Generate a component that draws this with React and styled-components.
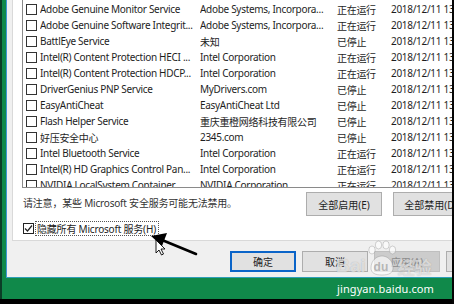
import styled, { createGlobalStyle } from 'styled-components';

const GlobalStyle = createGlobalStyle`
  html, body {
    margin: 0;
    padding: 0;
    background: #000;
  }
  * {
    box-sizing: border-box;
  }
`;

const services = [
  { name: 'Adobe Genuine Monitor Service', maker: 'Adobe Systems, Incorpora...', status: '正在运行' },
  { name: 'Adobe Genuine Software Integrit...', maker: 'Adobe Systems, Incorpora...', status: '正在运行' },
  { name: 'BattlEye Service', maker: '未知', status: '已停止' },
  { name: 'Intel(R) Content Protection HECI ...', maker: 'Intel Corporation', status: '正在运行' },
  { name: 'Intel(R) Content Protection HDCP...', maker: 'Intel Corporation', status: '正在运行' },
  { name: 'DriverGenius PNP Service', maker: 'MyDrivers.com', status: '已停止' },
  { name: 'EasyAntiCheat', maker: 'EasyAntiCheat Ltd', status: '已停止' },
  { name: 'Flash Helper Service', maker: '重庆重橙网络科技有限公司', status: '已停止' },
  { name: '好压安全中心', maker: '2345.com', status: '已停止' },
  { name: 'Intel Bluetooth Service', maker: 'Intel Corporation', status: '正在运行' },
  { name: 'Intel(R) HD Graphics Control Pan...', maker: 'Intel Corporation', status: '正在运行' },
  { name: 'NVIDIA LocalSystem Container', maker: 'NVIDIA Corporation', status: '正在运行' },
];

const App = () => {
  return (
    <>
      <GlobalStyle />
      <SScreen>
        <SDesktop>
          <SWindow>
            <SPanel>
              <SList>
                {services.map((s) => (
                  <SRow key={s.name}>
                    <SBox />
                    <SName>{s.name}</SName>
                    <SMaker>{s.maker}</SMaker>
                    <SStatus>{s.status}</SStatus>
                    <SDate>2018/12/11 13:42</SDate>
                  </SRow>
                ))}
              </SList>
              <SActionRow>
                <SNote>请注意，某些 Microsoft 安全服务可能无法禁用。</SNote>
                <SButtonGroup>
                  <SButton $wide>全部启用(E)</SButton>
                  <SButton $wide>全部禁用(D)</SButton>
                </SButtonGroup>
              </SActionRow>
              <SCheckRow>
                <SBox $checked>
                  <svg width="9" height="9" viewBox="0 0 9 9">
                    <path d="M1 4.5 L3.5 7 L8 1.5" fill="none" stroke="#222" strokeWidth="1.2" />
                  </svg>
                </SBox>
                <SFocusLabel>隐藏所有 Microsoft 服务(H)</SFocusLabel>
              </SCheckRow>
            </SPanel>
            <SDialogButtons>
              <SButton $default>确定</SButton>
              <SButton>取消</SButton>
              <SButton disabled>应用(A)</SButton>
              <SButton>帮助</SButton>
            </SDialogButtons>
          </SWindow>
          <SFooter>jingyan.baidu.com</SFooter>
        </SDesktop>
        <SRightEdge />

        <SWatermark>
          <SMarkText>Bai</SMarkText>
          <SPaw>
            <svg width="30" height="36" viewBox="0 0 30 36">
              <g fill="rgba(255,255,255,0.62)" stroke="rgba(120,120,120,0.4)" strokeWidth="0.8">
                <ellipse cx="5" cy="10" rx="3.2" ry="4" />
                <ellipse cx="11.5" cy="5" rx="3.2" ry="4" />
                <ellipse cx="19" cy="5" rx="3.2" ry="4" />
                <ellipse cx="25.5" cy="10" rx="3.2" ry="4" />
                <path d="M4 28 C4 20 10 16 15 16 C20 16 26 20 26 28 C26 33 22 35 15 35 C8 35 4 33 4 28 Z" />
              </g>
            </svg>
            <SPawText>du</SPawText>
          </SPaw>
          <SMarkText $cjk>经验</SMarkText>
        </SWatermark>

        <SPointer width="454" height="304" viewBox="0 0 454 304">
          <line x1="196" y1="254" x2="162" y2="240" stroke="#000" strokeWidth="2.6" strokeLinecap="round" />
          <polygon points="151,236 167,233 162,246" fill="#000" />
          <path
            d="M156 240 L156 253 L159 250 L161.5 255 L163.5 254 L161 249 L165 249 Z"
            fill="#fff"
            stroke="#000"
            strokeWidth="0.9"
            strokeLinejoin="round"
          />
        </SPointer>
      </SScreen>
    </>
  );
};

const SScreen = styled.div`
  position: relative;
  width: 454px;
  height: 304px;
  display: flex;
  background: #000;
  overflow: hidden;
  font-family: "Noto Sans", "Noto Sans CJK SC", sans-serif;
  font-size: 10px;
  color: #1e1e1e;
`;

const SDesktop = styled.div`
  width: 452px;
  height: 299px;
  flex-shrink: 0;
  display: flex;
  flex-direction: column;
  background: #10894a;
  border-left: 2px solid #0b3d27;
  padding-left: 4px;
  overflow: hidden;
`;

const SRightEdge = styled.div`
  flex: 1;
  background: #050505;
`;

const SWindow = styled.div`
  width: 540px;
  height: 278px;
  flex-shrink: 0;
  display: flex;
  flex-direction: column;
  padding-left: 5px;
  background: #f0f0f0;
  border-left: 1px solid #3d97d3;
  border-bottom: 1px solid #2f9fb8;
`;

const SPanel = styled.div`
  height: 241px;
  flex-shrink: 0;
  display: flex;
  flex-direction: column;
  padding: 0 0 4px 9px;
  background: #fff;
  border-left: 1px solid #d9d9d9;
  border-bottom: 1px solid #d9d9d9;
`;

const SList = styled.div`
  height: 188px;
  flex-shrink: 0;
  padding-top: 1px;
  overflow: hidden;
  background: #fff;
  border-left: 1px solid #8a8a8a;
  border-bottom: 1px solid #8a8a8a;
`;

const SRow = styled.div`
  height: 16px;
  display: flex;
  align-items: center;
  padding-left: 3px;
  white-space: nowrap;
  letter-spacing: -0.3px;
`;

const SBox = styled.span`
  width: 11px;
  height: 11px;
  flex-shrink: 0;
  display: flex;
  align-items: center;
  justify-content: center;
  margin-right: 3px;
  background: #fff;
  border: 1px solid ${(p) => (p.$checked ? '#222' : '#333')};
`;

const SName = styled.span`
  width: 160px;
  flex-shrink: 0;
  overflow: hidden;
`;

const SMaker = styled.span`
  width: 137px;
  flex-shrink: 0;
  overflow: hidden;
`;

const SStatus = styled.span`
  width: 54px;
  flex-shrink: 0;
`;

const SDate = styled.span`
  flex-shrink: 0;
`;

const SActionRow = styled.div`
  display: flex;
  margin-top: 4px;
  height: 24px;
`;

const SNote = styled.div`
  width: 284px;
  flex-shrink: 0;
  padding: 3px 0 0 1px;
  color: #333;
  letter-spacing: -0.2px;
`;

const SButtonGroup = styled.div`
  display: flex;
  gap: 11px;
`;

const SButton = styled.button`
  width: ${(p) => (p.$wide ? '76px' : '66px')};
  height: ${(p) => (p.$wide ? '24px' : '21px')};
  flex-shrink: 0;
  padding: 0;
  font-family: inherit;
  font-size: 10px;
  color: #1e1e1e;
  background: #e1e1e1;
  border: 1px solid #adadad;
  box-shadow: ${(p) => (p.$default ? 'inset 0 0 0 1px #0a64c8' : 'none')};
  border-color: ${(p) => (p.$default ? '#0a64c8' : '#adadad')};

  &:disabled {
    color: #8c8c8c;
    background: #cccccc;
    border-color: #bfbfbf;
  }
`;

const SCheckRow = styled.div`
  display: flex;
  align-items: center;
  height: 15px;
  margin-top: 5px;
  padding-left: 1px;

  ${SBox} {
    margin-right: 1px;
  }
`;

const SFocusLabel = styled.span`
  height: 15px;
  display: flex;
  align-items: center;
  padding: 0 2px 0 1px;
  border: 1px dotted #555;
  color: #222;
  letter-spacing: -0.2px;
`;

const SDialogButtons = styled.div`
  display: flex;
  gap: 6px;
  margin-top: 10px;
  padding-left: 218px;
`;

const SFooter = styled.div`
  flex: 1;
  display: flex;
  align-items: center;
  padding-left: 331px;
  color: #fff;
  font-size: 11px;
  letter-spacing: 0.1px;
`;

const SWatermark = styled.div`
  position: absolute;
  left: 336px;
  top: 240px;
  display: flex;
  align-items: flex-end;
  gap: 1px;
  pointer-events: none;
`;

const SMarkText = styled.span`
  font-family: ${(p) => (p.$cjk ? '"Noto Sans CJK SC", sans-serif' : '"Liberation Sans", sans-serif')};
  font-size: ${(p) => (p.$cjk ? '17px' : '19px')};
  font-weight: bold;
  line-height: 1;
  color: rgba(255, 255, 255, 0.62);
  text-shadow: 0 0 1px rgba(90, 90, 90, 0.45);
  margin-bottom: 1px;
`;

const SPaw = styled.span`
  position: relative;
  width: 30px;
  height: 36px;
  display: flex;

  svg {
    position: absolute;
    left: 0;
    top: 0;
  }
`;

const SPawText = styled.span`
  position: relative;
  margin: 20px 0 0 7px;
  font-family: "Liberation Sans", sans-serif;
  font-size: 12px;
  font-weight: bold;
  color: rgba(150, 150, 150, 0.65);
`;

const SPointer = styled.svg`
  position: absolute;
  left: 0;
  top: 0;
  pointer-events: none;
`;

export default App;
